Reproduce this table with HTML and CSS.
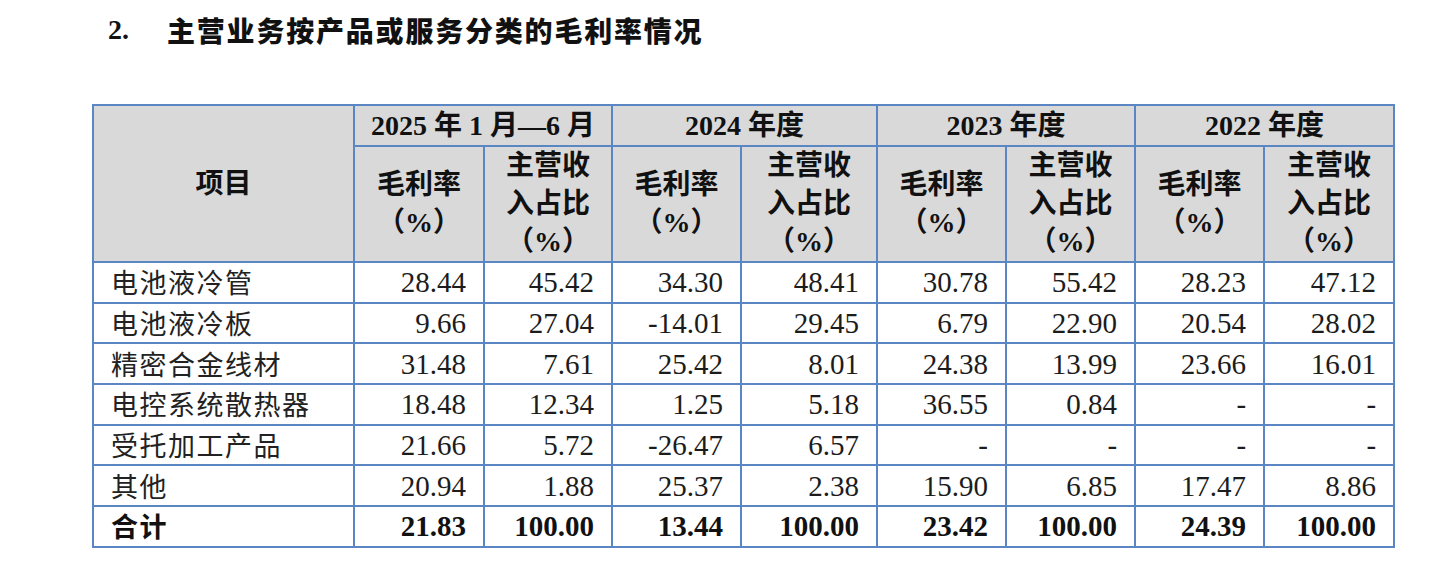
FILE: index.html
```html
<!DOCTYPE html>
<html lang="zh-CN">
<head>
<meta charset="utf-8">
<title>主营业务按产品或服务分类的毛利率情况</title>
<link rel="stylesheet" href="styles.css">
</head>
<body>
<h2 class="heading"><span class="num">2.</span><span class="title">主营业务按产品或服务分类的毛利率情况</span></h2>
<table class="grid">
  <colgroup>
    <col class="c-item">
    <col class="c-a"><col class="c-b">
    <col class="c-c"><col class="c-d">
    <col class="c-e"><col class="c-f">
    <col class="c-g"><col class="c-h">
  </colgroup>
  <thead>
    <tr class="r-year">
      <th rowspan="2">项目</th>
      <th colspan="2">2025 年 1 月—6 月</th>
      <th colspan="2">2024 年度</th>
      <th colspan="2">2023 年度</th>
      <th colspan="2">2022 年度</th>
    </tr>
    <tr class="r-sub">
      <th>毛利率<br>（%）</th><th>主营收<br>入占比<br>（%）</th>
      <th>毛利率<br>（%）</th><th>主营收<br>入占比<br>（%）</th>
      <th>毛利率<br>（%）</th><th>主营收<br>入占比<br>（%）</th>
      <th>毛利率<br>（%）</th><th>主营收<br>入占比<br>（%）</th>
    </tr>
  </thead>
  <tbody>
    <tr><td class="lbl">电池液冷管</td><td>28.44</td><td>45.42</td><td>34.30</td><td>48.41</td><td>30.78</td><td>55.42</td><td>28.23</td><td>47.12</td></tr>
    <tr><td class="lbl">电池液冷板</td><td>9.66</td><td>27.04</td><td>-14.01</td><td>29.45</td><td>6.79</td><td>22.90</td><td>20.54</td><td>28.02</td></tr>
    <tr><td class="lbl">精密合金线材</td><td>31.48</td><td>7.61</td><td>25.42</td><td>8.01</td><td>24.38</td><td>13.99</td><td>23.66</td><td>16.01</td></tr>
    <tr><td class="lbl">电控系统散热器</td><td>18.48</td><td>12.34</td><td>1.25</td><td>5.18</td><td>36.55</td><td>0.84</td><td>-</td><td>-</td></tr>
    <tr><td class="lbl">受托加工产品</td><td>21.66</td><td>5.72</td><td>-26.47</td><td>6.57</td><td>-</td><td>-</td><td>-</td><td>-</td></tr>
    <tr><td class="lbl">其他</td><td>20.94</td><td>1.88</td><td>25.37</td><td>2.38</td><td>15.90</td><td>6.85</td><td>17.47</td><td>8.86</td></tr>
    <tr class="total"><td class="lbl">合计</td><td>21.83</td><td>100.00</td><td>13.44</td><td>100.00</td><td>23.42</td><td>100.00</td><td>24.39</td><td>100.00</td></tr>
  </tbody>
</table>
</body>
</html>
```
FILE: styles.css
```css
html, body {
  margin: 0;
  padding: 0;
  background: #ffffff;
}

body {
  font-family: "Liberation Serif", "Noto Sans CJK SC", serif;
  color: #1c1c1c;
}

.heading {
  margin: 0;
  padding: 11px 0 0 108px;
  height: 38px;
  display: flex;
  align-items: center;
  font-size: 28px;
  font-weight: 700;
  line-height: 34px;
  color: #111;
}

.heading .num {
  font-family: "Liberation Serif", serif;
  width: 59px;
}

.heading .title {
  font-family: "Noto Sans CJK SC", sans-serif;
  font-weight: 900;
  letter-spacing: 1.8px;
}

.grid {
  margin: 55px 0 0 92px;
  border-collapse: collapse;
  table-layout: fixed;
  width: 1301px;
  font-size: 28px;
}

.c-item { width: 261px; }
.c-a { width: 130px; }
.c-b { width: 128px; }
.c-c { width: 129px; }
.c-d { width: 136px; }
.c-e { width: 129px; }
.c-f { width: 129px; }
.c-g { width: 129px; }
.c-h { width: 130px; }

.grid th,
.grid td {
  border: 2px solid #5a86c3;
  padding: 0;
}

.grid th {
  background: #d9d9d9;
  font-weight: 700;
  text-align: center;
  vertical-align: middle;
  font-family: "Liberation Serif", "Noto Sans CJK SC", serif;
  color: #111;
}

.r-year th {
  height: 39px;
  line-height: 39px;
}

.r-sub th {
  height: 113px;
  line-height: 38px;
}

.grid td {
  height: 38.7px;
  line-height: 38px;
  text-align: right;
  padding-right: 17px;
  font-size: 29px;
  white-space: nowrap;
}

.grid td.lbl {
  text-align: left;
  padding-left: 17px;
  padding-right: 0;
  font-family: "Noto Sans CJK SC", sans-serif;
  font-weight: 400;
  font-size: 27px;
  letter-spacing: 1.5px;
  color: #222;
}

.total td {
  font-weight: 700;
  color: #111;
}

.total td.lbl {
  font-weight: 700;
  color: #111;
}
```
